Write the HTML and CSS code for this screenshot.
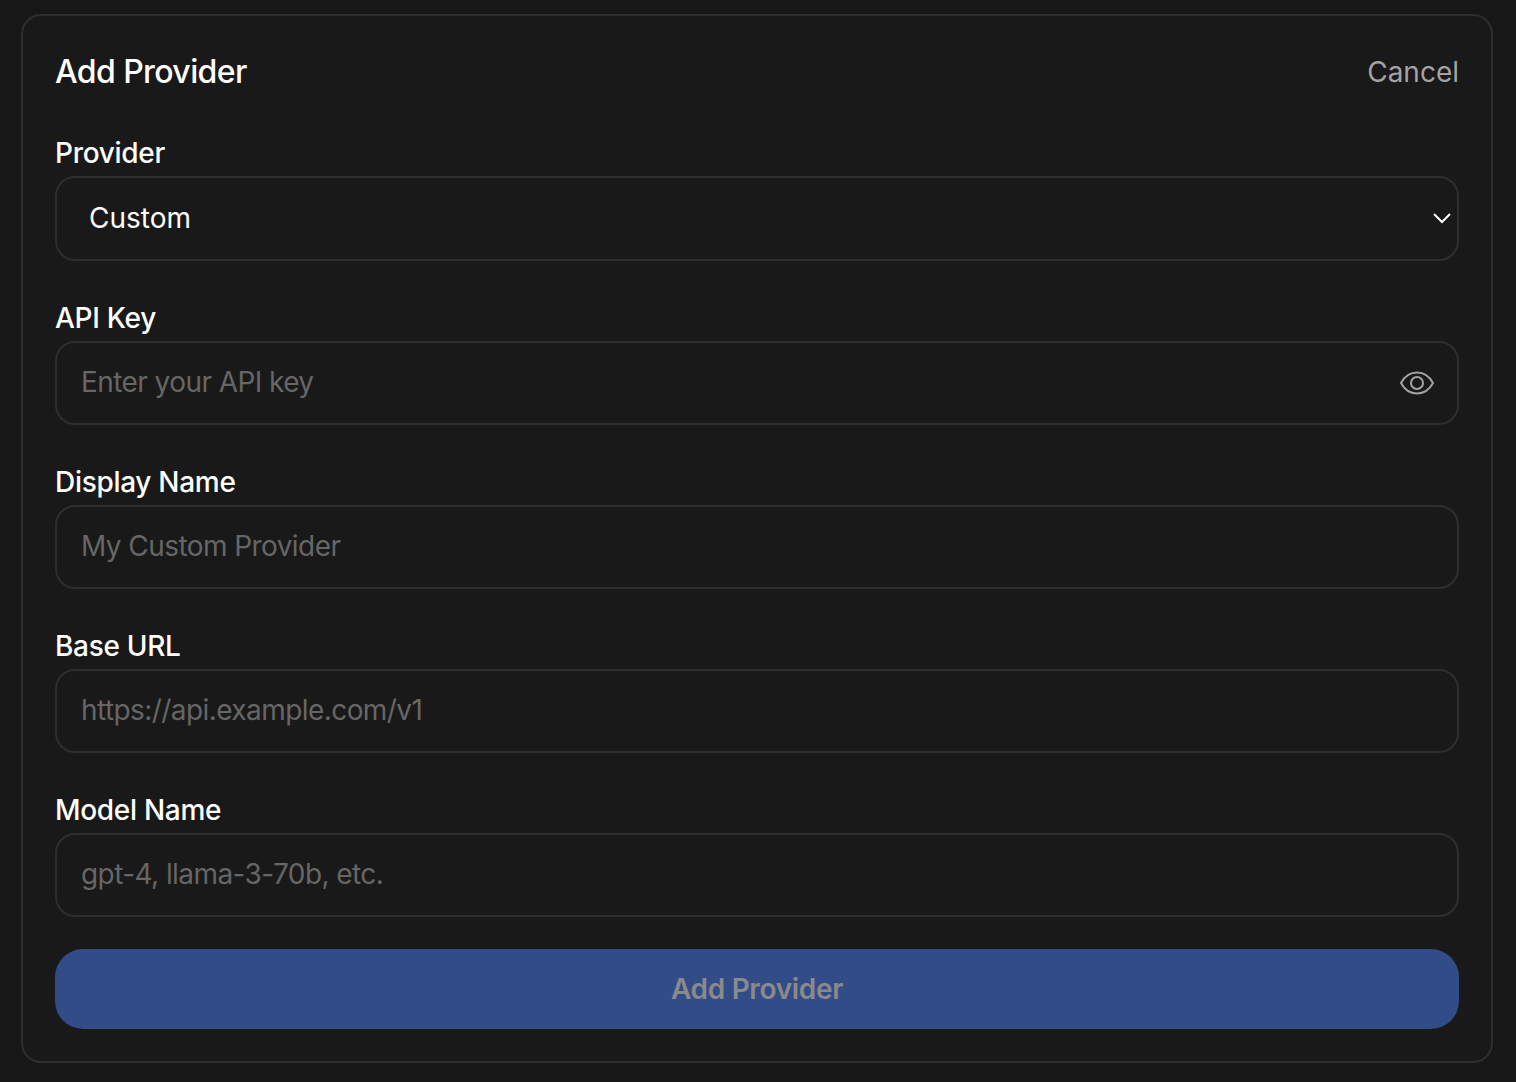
FILE: index.html
```html
<!DOCTYPE html>
<html lang="en">
<head>
    <meta charset="UTF-8">
    <meta name="viewport" content="width=device-width, initial-scale=1.0">
    <title>Add Provider</title>
    <link rel="stylesheet" href="styles.css">
</head>
<body>
    <div class="provider-card">
        <div class="card-header">
            <h1>Add Provider</h1>
            <button type="button" class="cancel-btn">Cancel</button>
        </div>

        <div class="form-group">
            <label>Provider</label>
            <div class="field select-field">
                <span class="select-value">Custom</span>
                <svg class="chevron" width="18" height="12" viewBox="0 0 18 12" fill="none" stroke="#fff" stroke-width="2">
                    <path d="M1 2l8 8 8-8"/>
                </svg>
            </div>
        </div>

        <div class="form-group">
            <label for="apiKey">API Key</label>
            <div class="field">
                <input type="text" id="apiKey" placeholder="Enter your API key">
                <svg class="eye" width="34" height="24" viewBox="0 0 34 24" fill="none" stroke="#a3a3a3" stroke-width="2">
                    <path d="M1 12C4.500 5.500 10.500 1.500 17 1.500S29.500 5.500 33 12c-3.500 6.500-9.500 10.500-16 10.500S4.500 18.500 1 12z"/>
                    <circle cx="17" cy="12" r="6"/>
                </svg>
            </div>
        </div>

        <div class="form-group">
            <label for="displayName">Display Name</label>
            <div class="field">
                <input type="text" id="displayName" placeholder="My Custom Provider">
            </div>
        </div>

        <div class="form-group">
            <label for="baseUrl">Base URL</label>
            <div class="field">
                <input type="text" id="baseUrl" placeholder="https://api.example.com/v1">
            </div>
        </div>

        <div class="form-group last-group">
            <label for="modelName">Model Name</label>
            <div class="field">
                <input type="text" id="modelName" placeholder="gpt-4, llama-3-70b, etc.">
            </div>
        </div>

        <button type="button" class="submit-btn">Add Provider</button>
    </div>
</body>
</html>
```
FILE: styles.css
```css
* {
    box-sizing: border-box;
}
body {
    margin: 0;
    padding: 14px 23px 19px 21px;
    background-color: #171717;
    font-family: Inter, "Liberation Sans", sans-serif;
}
.provider-card {
    height: 1049px;
    padding: 31px 32px 32px;
    background-color: #191919;
    border: 2px solid #2e2e2e;
    border-radius: 20px;
}
.card-header {
    display: flex;
    justify-content: space-between;
    align-items: center;
    height: 48px;
    margin-bottom: 39px;
}
h1 {
    margin: 0;
    font-size: 32px;
    font-weight: 500;
    letter-spacing: -0.6px;
    color: #fff;
}
.cancel-btn {
    padding: 2px 0 0;
    background: none;
    border: none;
    font-family: inherit;
    font-size: 28px;
    color: #a3a3a3;
}
.form-group {
    margin-bottom: 38px;
}
.last-group {
    margin-bottom: 32px;
}
label {
    display: block;
    height: 38px;
    margin-bottom: 4px;
    line-height: 38px;
    font-size: 28px;
    font-weight: 500;
    letter-spacing: -0.3px;
    color: #fff;
}
.field {
    display: flex;
    align-items: center;
    height: 84px;
    padding: 0 23px 0 24px;
    border: 2px solid #2e2e2e;
    border-radius: 20px;
}
.select-field {
    height: 85px;
    padding: 0 6px 2px 32px;
    justify-content: space-between;
}
.select-value {
    font-size: 28px;
    color: #fff;
}
input {
    flex: 1;
    min-width: 0;
    margin-bottom: 2px;
    padding: 0;
    background: none;
    border: none;
    outline: none;
    font-family: inherit;
    font-size: 28px;
    letter-spacing: -0.57px;
    color: #fff;
}
input::placeholder {
    color: #666;
}
.eye {
    flex-shrink: 0;
}
.submit-btn {
    display: block;
    width: 100%;
    height: 80px;
    padding-bottom: 2px;
    background-color: #324c88;
    border: none;
    border-radius: 28px;
    font-family: inherit;
    font-size: 28px;
    font-weight: 600;
    letter-spacing: -0.33px;
    color: #8a8a8a;
}
```
